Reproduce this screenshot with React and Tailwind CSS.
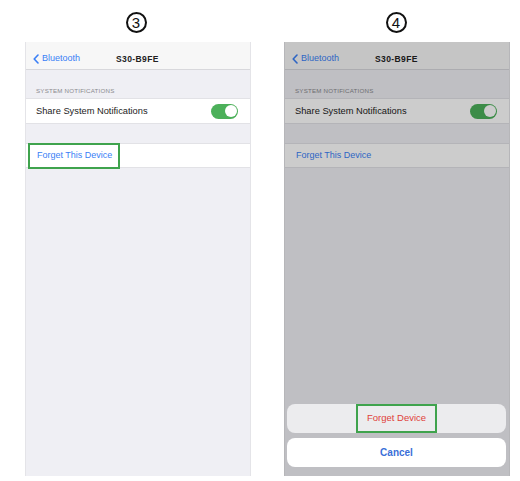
import React from 'react';

const font = { fontFamily: '"Liberation Sans", Arial, sans-serif' };

function Chevron({ color }) {
  return (
    <svg width="6" height="10" viewBox="0 0 6 10" className="mr-[3px]">
      <path d="M5 1 L1.2 5 L5 9" fill="none" stroke={color} strokeWidth="1.6" strokeLinecap="round" strokeLinejoin="round" />
    </svg>
  );
}

function Circled({ n }) {
  return (
    <div className="w-[21px] h-[21px] rounded-full border-2 border-[#111] flex items-center justify-center text-[15px] leading-none text-[#111]">
      {n}
    </div>
  );
}

function Phone({ highlight }) {
  return (
    <div className="w-[226px] h-[434px] bg-[#efeff4] border-x border-[#e4e4e8] flex flex-col">
      <div className="h-[28px] bg-[#f7f7f7] border-b border-[#d8d8dc] flex items-center px-[7px] pt-[6px] relative">
        <div className="flex items-center text-[#3a7ff6] text-[9px]">
          <Chevron color="#3a7ff6" />
          Bluetooth
        </div>
        <div className="absolute left-[90px] top-[11px] text-[8.5px] font-bold text-[#222] tracking-[0.4px]">S30-B9FE</div>
      </div>
      <div className="h-[28px] flex items-end px-[10px] pb-[3px] text-[6.2px] text-[#8a8a8e] tracking-[0.2px]">SYSTEM NOTIFICATIONS</div>
      <div className="h-[26px] bg-white border-y border-[#e2e2e6] flex items-center justify-between pl-[10px] pr-[12px]">
        <span className="text-[9.3px] text-[#1c1c1c] pt-[2px]">Share System Notifications</span>
        <div className="w-[27px] h-[15px] rounded-full bg-[#4cb05a] flex items-center justify-end pr-[1.5px]">
          <div className="w-[12px] h-[12px] rounded-full bg-white" />
        </div>
      </div>
      <div className="h-[19px]" />
      <div className="h-[25px] bg-white border-y border-[#e2e2e6] flex items-center">
        <div className={`ml-[2px] h-[26px] w-[92px] flex items-center pl-[7px] border-2 ${highlight ? 'border-[#3fa34d]' : 'border-transparent'}`}>
          <span className="text-[9px] text-[#3a7ff6]">Forget This Device</span>
        </div>
      </div>
    </div>
  );
}

export default function App() {
  return (
    <div className="w-[520px] h-[481px] bg-white flex gap-[33px] pl-[25px]" style={font}>
      <div className="flex flex-col">
        <div className="h-[42px] flex justify-center pt-[12px]"><div className="ml-[-4px]"><Circled n="3" /></div></div>
        <Phone highlight />
      </div>
      <div className="flex flex-col">
        <div className="h-[42px] flex justify-center pt-[12px]"><div className="ml-[-2px]"><Circled n="4" /></div></div>
        <div className="relative">
          <Phone />
          <div className="absolute inset-0 bg-black/[0.2]" />
          <div className="absolute left-[3px] right-[4px] bottom-[9px] flex flex-col gap-[5px]">
            <div className="h-[29px] rounded-[8px] bg-[#ececee] flex justify-center">
              <div className="w-[81px] h-[29px] border-2 border-[#3fa34d] flex items-center justify-center text-[9.5px] text-[#e0413a]">Forget Device</div>
            </div>
            <div className="h-[29px] rounded-[8px] bg-white flex items-center justify-center text-[10px] font-bold text-[#3a6fd8]">Cancel</div>
          </div>
        </div>
      </div>
    </div>
  );
}
